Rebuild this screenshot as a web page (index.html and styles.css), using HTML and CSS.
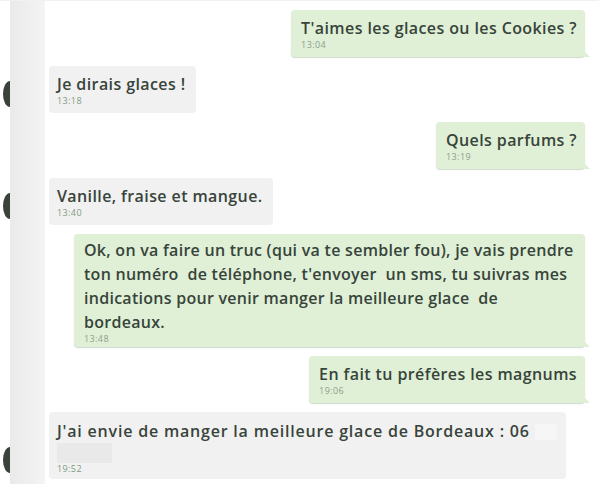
FILE: index.html
```html
<!DOCTYPE html>
<html lang="fr">
<head>
<meta charset="utf-8">
<title>Chat</title>
<link rel="stylesheet" href="styles.css">
</head>
<body>
<div class="chat">
  <div class="row out">
    <div class="bubble green">
      <p class="msg">T'aimes les glaces ou les Cookies ?</p>
      <span class="time">13:04</span>
    </div>
  </div>
  <div class="row in">
    <span class="avatar"></span>
    <div class="bubble gray">
      <p class="msg">Je dirais glaces !</p>
      <span class="time">13:18</span>
    </div>
  </div>
  <div class="row out">
    <div class="bubble green">
      <p class="msg">Quels parfums ?</p>
      <span class="time">13:19</span>
    </div>
  </div>
  <div class="row in">
    <span class="avatar"></span>
    <div class="bubble gray">
      <p class="msg">Vanille, fraise et mangue.</p>
      <span class="time">13:40</span>
    </div>
  </div>
  <div class="row out">
    <div class="bubble green wide">
      <p class="msg multi">Ok, on va faire un truc (qui va te sembler fou), je vais prendre<br>ton numéro&nbsp; de téléphone, t'envoyer&nbsp; un sms, tu suivras mes<br>indications pour venir manger la meilleure glace&nbsp; de<br>bordeaux.</p>
      <span class="time">13:48</span>
    </div>
  </div>
  <div class="row out">
    <div class="bubble green">
      <p class="msg">En fait tu préfères les magnums</p>
      <span class="time">19:06</span>
    </div>
  </div>
  <div class="row in">
    <span class="avatar"></span>
    <div class="bubble gray last">
      <p class="msg spaced">J'ai envie de manger la meilleure glace de Bordeaux : 06 <span class="blur-inline"></span></p>
      <span class="blur-block"></span>
      <span class="time">19:52</span>
    </div>
  </div>
</div>
</body>
</html>
```
FILE: styles.css
```css
html, body {
  margin: 0;
  padding: 0;
  background: #ffffff;
}

body {
  width: 599px;
  height: 484px;
  overflow: hidden;
  font-family: "Open Sans", "Lato", sans-serif;
}

.chat {
  display: flex;
  flex-direction: column;
  gap: 9px;
  padding: 9px 14px 0 49px;
  min-height: 484px;
  box-sizing: border-box;
  border-top: 1px solid #f1f1f1;
  background: linear-gradient(to right, #ffffff 0, #ffffff 10px, #eaeaea 10px, #efefef 30px, #f4f4f4 45px, #ffffff 45px);
}

.row {
  display: flex;
  align-items: flex-end;
  position: relative;
}

.row.out {
  justify-content: flex-end;
}

.row.in {
  justify-content: flex-start;
}

.avatar {
  position: absolute;
  left: -46px;
  bottom: 6px;
  width: 7px;
  height: 26px;
  border-radius: 100% 0 0 100% / 50% 0 0 50%;
  background: #3a423b;
}

.bubble {
  position: relative;
  border-radius: 4px;
  padding: 8px 8px 7px 10px;
  box-sizing: border-box;
}

.green {
  background: #dff0d7;
  box-shadow: 0 1px 1px rgba(120, 150, 110, 0.35);
}

.green::after {
  content: "";
  position: absolute;
  right: -5px;
  bottom: 0;
  width: 0;
  height: 0;
  border-left: 6px solid #dff0d7;
  border-top: 6px solid transparent;
}

.gray {
  background: #f1f1f1;
  padding-left: 8px;
  padding-right: 10px;
}

.wide {
  width: 511px;
  padding: 4px 10px 3px 10px;
}

.msg {
  margin: 0;
  font-size: 16px;
  font-weight: 600;
  line-height: 20px;
  letter-spacing: 0.4px;
  color: #38443a;
  white-space: nowrap;
}

.msg.multi {
  line-height: 24px;
  letter-spacing: 0.27px;
}

.msg.spaced {
  letter-spacing: 0.8px;
}

.time {
  display: block;
  margin-top: 2px;
  font-size: 9px;
  line-height: 10px;
  letter-spacing: 0.4px;
  color: #8f9d8f;
}

.wide .time {
  margin-top: 0;
}

.gray .time {
  color: #7f9a82;
}

.last {
  width: 517px;
  padding: 9px 10px 5px 8px;
}

.blur-inline {
  display: inline-block;
  width: 22px;
  height: 16px;
  vertical-align: -3px;
  background: #f6f6f6;
}

.blur-block {
  display: block;
  width: 55px;
  height: 20px;
  margin-top: 2px;
  background: #e9e9e9;
}

.last .time {
  margin-top: 1px;
}
```
